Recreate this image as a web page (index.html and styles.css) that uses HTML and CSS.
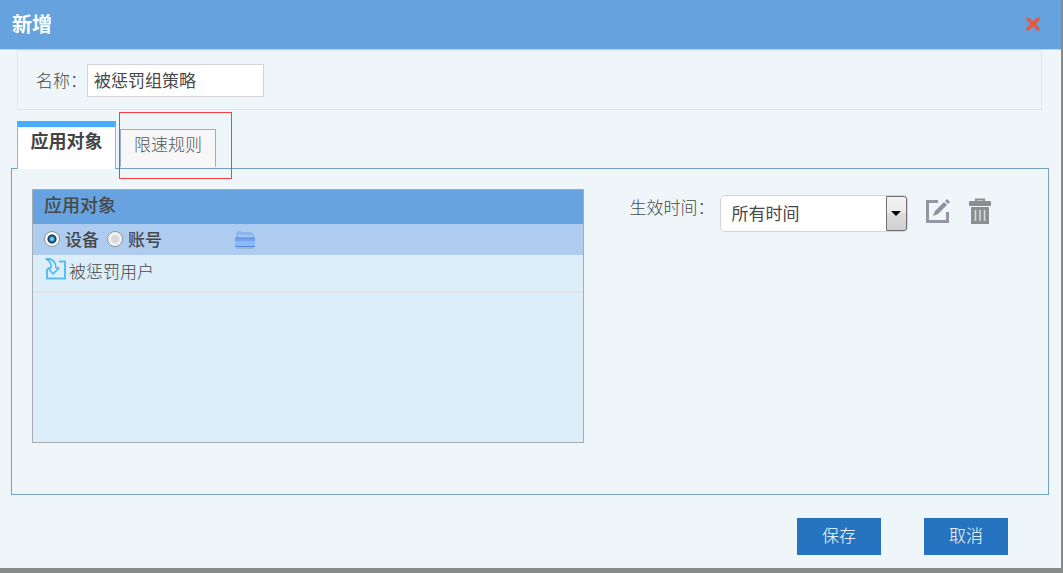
FILE: index.html
```
<!DOCTYPE html>
<html lang="zh-CN">

<head>
    <meta charset="UTF-8">
    <meta name="viewport" content="width=device-width, initial-scale=1.0">
    <title>新增</title>
    <link rel="stylesheet" href="styles.css">
</head>

<body>

    <form class="dialog">
        <div class="dialog-header">
            <h1>新增</h1>
            <button type="button" class="close" aria-label="关闭">
                <svg width="16" height="16" viewBox="0 0 16 16">
                    <path d="M3 3L13 13M13 3L3 13" stroke="#e9573f" stroke-width="3.500" stroke-linecap="round"/>
                </svg>
            </button>
        </div>

        <div class="name-box">
            <label for="name">名称：</label>
            <input type="text" id="name" value="被惩罚组策略">
        </div>

        <div class="tabs">
            <button type="button" class="tab active">应用对象</button>
            <div class="tab-mark">
                <button type="button" class="tab">限速规则</button>
            </div>
        </div>

        <div class="panel">
            <div class="list">
                <div class="list-header">应用对象</div>
                <div class="list-types">
                    <input type="radio" name="type" id="device" checked>
                    <label for="device">设备</label>
                    <input type="radio" name="type" id="account">
                    <label for="account">账号</label>
                    <button type="button" class="folder" aria-label="选择">
                        <svg width="22" height="18" viewBox="0 0 22 18">
                            <path d="M3 8V2Q3 1 4 1H7L8 2H17Q19 2 19 4V8Z" fill="#8fb9f0" stroke="#7aa8e8"/>
                            <path d="M4 5H18" stroke="#b5d2f8"/>
                            <path d="M1 7H21V15H1Z" fill="#8cbaf8"/>
                            <path d="M1 7H21V10H1Z" fill="#6ea4f0"/>
                            <path d="M1 7H21" stroke="#5c91df"/>
                            <path d="M1 15H21V16H1Z" fill="#5588d5"/>
                            <path d="M2 17H20" stroke="#8a9fc0"/>
                        </svg>
                    </button>
                </div>
                <div class="list-row">
                    <svg width="22" height="23" viewBox="0 0 22 23">
                        <path d="M2 11V20.500H20V3.500H14" fill="none" stroke="#5bbcf5" stroke-width="2"/>
                        <path d="M1 1Q9 0 10.500 7L11 10H14L8 16L3 10H6Q7 4 1 1Z" fill="#d5efff" stroke="#4bb4f3" stroke-width="1.500" stroke-linejoin="round"/>
                    </svg>
                    <span>被惩罚用户</span>
                </div>
            </div>

            <div class="time">
                <label for="time">生效时间：</label>
                <div class="select-box">
                    <select id="time">
                        <option>所有时间</option>
                    </select>
                </div>
                <button type="button" class="icon edit" aria-label="编辑">
                    <svg width="26" height="26" viewBox="0 0 26 26">
                        <path d="M13 3.500H2.500V23.500H22.500V14" fill="none" stroke="#9496a3" stroke-width="3"/>
                        <path d="M8 18L10 13L19 4L22 7L13 16Z" fill="#8e909d"/>
                        <path d="M20 3L22 1L25 4L23 6Z" fill="#8e909d"/>
                    </svg>
                </button>
                <button type="button" class="icon" aria-label="删除">
                    <svg width="22" height="26" viewBox="0 0 22 26">
                        <path d="M7 4V1.500H15V4" fill="none" stroke="#8e8e8e" stroke-width="2"/>
                        <path d="M0 8V4Q0 3 1 3H21Q22 3 22 4V8Z" fill="#8e8e8e"/>
                        <path d="M2 9H20V26H2Z" fill="#8e8e8e"/>
                        <path d="M6.500 12V23M11 12V23M15.500 12V23" stroke="#d9dddf" stroke-width="1.500"/>
                    </svg>
                </button>
            </div>
        </div>

        <div class="buttons">
            <button type="button">保存</button>
            <button type="button">取消</button>
        </div>
    </form>

</body>

</html>
```
FILE: styles.css
```
*,
*::before,
*::after {
    box-sizing: border-box;
}

body {
    margin: 0;
    padding: 0 2px 5px 0;
    background-color: #888a89;
    color: #484848;
    font-family: "Noto Sans CJK SC", sans-serif;
    font-size: 17px;
    font-weight: 300;
    line-height: 24px;
}

button,
input,
select {
    margin: 0;
    font: inherit;
    color: inherit;
}

button {
    border: none;
    padding: 0;
    background: none;
    cursor: pointer;
}

svg {
    display: block;
}

.dialog {
    min-height: calc(100vh - 5px);
    background-color: #eef6fa;
}

.dialog-header {
    display: flex;
    justify-content: space-between;
    align-items: center;
    height: 50px;
    padding: 0 20px 2px 12px;
    background-color: #66a3de;
    border-bottom: 1px solid #b9d8f3;
    color: white;
}

.dialog-header h1 {
    margin: 0;
    font-size: 20px;
}

.name-box {
    display: flex;
    margin: 0 19px 0 17px;
    padding: 13px 18px 12px;
    border: 1px solid #e2e6e8;
}

.name-box label {
    width: 51px;
    padding-top: 4px;
    white-space: nowrap;
}

.name-box input {
    width: 177px;
    height: 33px;
    padding: 0 6px 2px;
    border: 1px solid #d5d5d5;
    background: white;
    font-weight: 400;
}

/* tabs */
.tabs {
    display: flex;
    align-items: flex-end;
    gap: 4px;
    height: 48px;
    margin: 11px 17px -1px;
}

.tab {
    width: 96px;
    height: 38px;
    padding-bottom: 10px;
    border: 1px solid #9ab0d0;
    border-bottom: none;
    background-color: #f7f7f7;
    color: #555;
}

.tab.active {
    width: 99px;
    height: 48px;
    padding-bottom: 16px;
    border-top: 6px solid #45adff;
    background-color: white;
    color: #444;
    font-size: 18px;
    font-weight: bold;
    position: relative;
}

.tab-mark {
    position: relative;
    padding-bottom: 2px;
}

.tab-mark::after {
    content: "";
    position: absolute;
    top: -17px;
    left: -1px;
    width: 113px;
    height: 67px;
    border: 1px solid #f93e42;
    pointer-events: none;
}

.tab-mark .tab {
    display: block;
}

.panel {
    display: grid;
    grid-template-columns: 18fr 13fr;
    gap: 46px;
    margin: 0 12px 0 11px;
    padding: 20px 20px 51px;
    border: 1px solid #769fc1;
}

.list {
    min-height: 254px;
    border: 1px solid #a9acaf;
    background-color: #dceefa;
}

.list-header {
    height: 34px;
    padding: 2px 11px;
    background-color: #66a3e0;
    font-size: 18px;
    font-weight: 500;
}

.list-types {
    display: flex;
    align-items: center;
    height: 31px;
    padding: 0 11px 2px;
    background-color: #aeccef;
}

.list-types label {
    margin: 0 8px 0 5px;
    font-weight: 500;
}

.list-types input {
    appearance: none;
    width: 16px;
    height: 16px;
    border: 1px solid #8f9498;
    border-radius: 50%;
    background: radial-gradient(circle, #d5d9dc 3px, #f8f8f8 6px);
}

.list-types input:checked {
    background: radial-gradient(circle, #7fd5f5 1px, #17618f 3px, #0b2f4d 4px, #f8f8f8 5px);
}

.folder {
    margin: 2px 0 0 64px;
}

.list-row {
    display: flex;
    height: 38px;
    padding: 3px 12px;
    border-bottom: 2px solid #dfe3e6;
}

.list-row span {
    padding-top: 1px;
    margin-left: 2px;
}

.time {
    display: flex;
    align-items: flex-start;
    padding-top: 6px;
}

.time label {
    width: 90px;
    white-space: nowrap;
}

.select-box {
    position: relative;
    width: 188px;
}

.select-box select {
    appearance: none;
    display: block;
    width: 100%;
    height: 37px;
    padding: 0 24px 1px 11px;
    border: 1px solid #d5d5d5;
    border-radius: 5px;
    background-color: white;
    font-weight: 400;
}

.select-box::before {
    content: "";
    position: absolute;
    top: 1px;
    right: 1px;
    width: 21px;
    height: 35px;
    border: 1px solid #707070;
    border-radius: 0 3px 3px 0;
    background: linear-gradient(#f2f2f2 0, #ebebeb 50%, #dddddd 50%, #cfcfcf 100%);
    pointer-events: none;
}

.select-box::after {
    content: "";
    position: absolute;
    top: 16px;
    right: 7px;
    border: 5px solid transparent;
    border-top-color: black;
    border-bottom: none;
    pointer-events: none;
}

.icon {
    margin: 3px 0 0 18px;
}

.edit {
    margin-left: 17px;
}

.buttons {
    display: flex;
    justify-content: flex-end;
    gap: 43px;
    padding: 23px 53px 13px;
}

.buttons button {
    width: 84px;
    height: 37px;
    padding-bottom: 4px;
    background-color: #2673bf;
    color: white;
}
```
